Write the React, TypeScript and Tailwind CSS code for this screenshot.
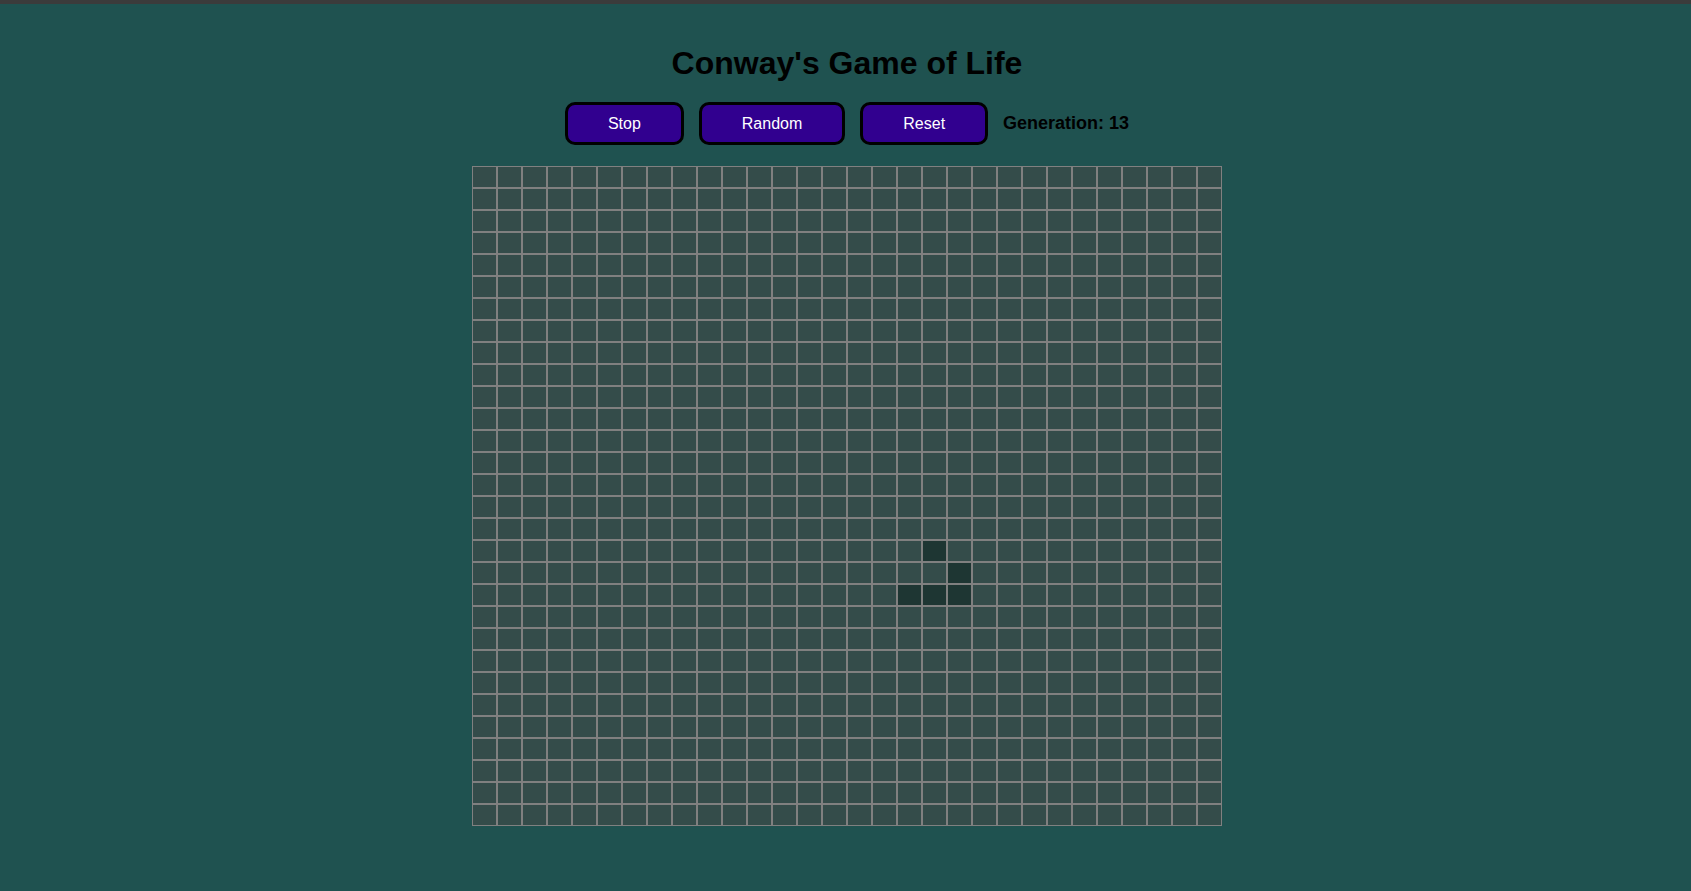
import React from "react";

const ROWS = 30;
const COLS = 30;
const alive = new Set(["17-18", "18-19", "19-17", "19-18", "19-19"]);

export default function App() {
  const cells: React.ReactNode[] = [];
  for (let r = 0; r < ROWS; r++) {
    for (let c = 0; c < COLS; c++) {
      const on = alive.has(`${r}-${c}`);
      cells.push(
        <div
          key={`${r}-${c}`}
          className={
            on
              ? "w-[25px] h-[22px] border border-[#808080] bg-[#1e3633]"
              : "w-[25px] h-[22px] border border-[#808080] bg-[#344c4a]"
          }
        />
      );
    }
  }
  return (
    <div
      className="min-h-screen w-full bg-[#1f5250] border-t-4 border-[#3b3b3b] flex flex-col items-center pl-[3px]"
      style={{ fontFamily: '"Liberation Sans", Arial, sans-serif' }}
    >
      <h1 className="mt-[41px] text-[32px] leading-[37px] font-bold text-black">
        Conway's Game of Life
      </h1>
      <div className="mt-[20px] flex items-center gap-[15px]">
        <button className="h-[43px] px-[40px] border-[3px] border-black rounded-[10px] bg-[#31008f] text-white text-[16px] leading-none">
          Stop
        </button>
        <button className="h-[43px] px-[40px] border-[3px] border-black rounded-[10px] bg-[#31008f] text-white text-[16px] leading-none">
          Random
        </button>
        <button className="h-[43px] px-[40px] border-[3px] border-black rounded-[10px] bg-[#31008f] text-white text-[16px] leading-none">
          Reset
        </button>
        <span className="text-[18px] font-bold text-black">Generation: 13</span>
      </div>
      <div className="mt-[21px] grid grid-cols-[repeat(30,25px)]">{cells}</div>
    </div>
  );
}
